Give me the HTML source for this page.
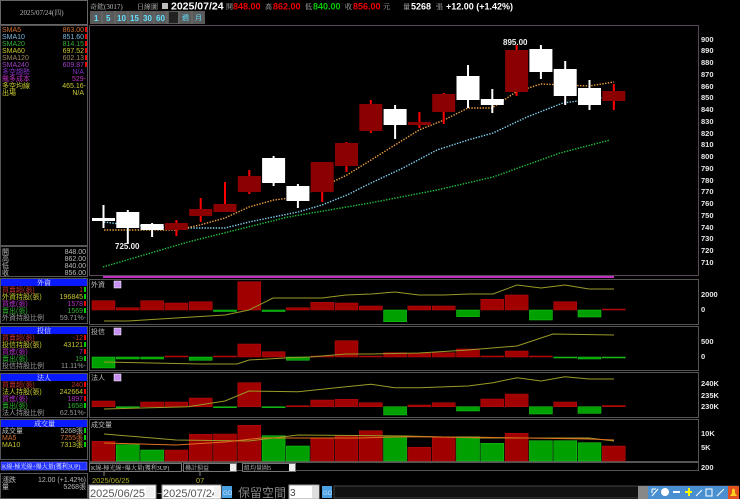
<!DOCTYPE html>
<html><head><meta charset="utf-8"><style>
html,body{margin:0;padding:0;background:#000;width:740px;height:499px;overflow:hidden}
svg{display:block;font-size:7px}
text{font-family:"Liberation Sans","Noto Sans CJK TC",sans-serif}
.s{font-family:"Liberation Serif","Noto Serif CJK SC",serif}
.ax{fill:#e8e8e8;font-weight:bold;font-size:7.5px}
</style></head><body>
<svg width="740" height="499" viewBox="0 0 740 499">
<rect width="740" height="499" fill="#000"/>
<!-- left panel -->
<rect x="0.5" y="0.5" width="87" height="24" fill="#000" stroke="#666"/>
<text x="20" y="15" fill="#bbb" class="s">2025/07/24(四)</text>
<rect x="0.5" y="25.5" width="87" height="220" fill="#000" stroke="#555"/>
<g class="s">
<text x="2" y="32" fill="#d07030">SMA5</text><text x="84" y="32" fill="#d07030" text-anchor="end">863.00</text>
<text x="2" y="39" fill="#7ab8e0">SMA10</text><text x="84" y="39" fill="#7ab8e0" text-anchor="end">851.60</text>
<text x="2" y="46" fill="#30b030">SMA20</text><text x="84" y="46" fill="#30b030" text-anchor="end">814.15</text>
<text x="2" y="53" fill="#c8c830">SMA60</text><text x="84" y="53" fill="#c8c830" text-anchor="end">697.52</text>
<text x="2" y="60" fill="#a08860">SMA120</text><text x="84" y="60" fill="#a08860" text-anchor="end">602.13</text>
<text x="2" y="67" fill="#a040c0">SMA240</text><text x="84" y="67" fill="#a040c0" text-anchor="end">609.87</text>
<text x="2" y="74" fill="#8030c0">多空趨勢</text><text x="84" y="74" fill="#8030c0" text-anchor="end">N/A</text>
<text x="2" y="81" fill="#c030c0">飆多成本</text><text x="86" y="81" fill="#c030c0" text-anchor="end">529-</text>
<text x="2" y="88" fill="#c8c830">多空均線</text><text x="86" y="88" fill="#c8c830" text-anchor="end">465.16-</text>
<text x="2" y="95" fill="#c8c830">出場</text><text x="84" y="95" fill="#c8c830" text-anchor="end">N/A</text>
</g>
<g fill="#e00">
<rect x="85" y="27" width="2" height="5"/><rect x="85" y="34" width="2" height="5"/><rect x="85" y="41" width="2" height="5"/><rect x="85" y="48" width="2" height="5"/><rect x="85" y="55" width="2" height="5"/><rect x="85" y="62" width="2" height="5"/>
</g>
<rect x="0.5" y="246.5" width="87" height="30" fill="#000" stroke="#555"/>
<g class="s" fill="#bbb">
<text x="2" y="254">開</text><text x="86" y="254" text-anchor="end">848.00</text>
<text x="2" y="261">高</text><text x="86" y="261" text-anchor="end">862.00</text>
<text x="2" y="268">低</text><text x="86" y="268" text-anchor="end">840.00</text>
<text x="2" y="275">收</text><text x="86" y="275" text-anchor="end">856.00</text>
</g>
<!-- 外資 -->
<rect x="1" y="279" width="86" height="7" fill="#0a1aff"/><text x="37" y="285" fill="#eee" class="s">外資</text>
<g class="s">
<text x="2" y="292" fill="#c03030">買賣超(張)</text><text x="83" y="292" fill="#c03030" text-anchor="end">1</text>
<text x="2" y="299" fill="#c8c830">外資持股(張)</text><text x="83" y="299" fill="#c8c830" text-anchor="end">196845</text>
<text x="2" y="306" fill="#b030c0">買進(張)</text><text x="83" y="306" fill="#b030c0" text-anchor="end">1578</text>
<text x="2" y="313" fill="#30b030">賣出(張)</text><text x="83" y="313" fill="#30b030" text-anchor="end">1569</text>
<text x="2" y="320" fill="#999">外資持股比例</text><text x="86" y="320" fill="#999" text-anchor="end">59.71%-</text>
</g>
<rect x="1" y="327" width="86" height="7" fill="#0a1aff"/><text x="37" y="333" fill="#eee" class="s">投信</text>
<g class="s">
<text x="2" y="340" fill="#c03030">買賣超(張)</text><text x="83" y="340" fill="#c03030" text-anchor="end">-12</text>
<text x="2" y="347" fill="#c8c830">投信持股(張)</text><text x="83" y="347" fill="#c8c830" text-anchor="end">43121</text>
<text x="2" y="354" fill="#b030c0">買進(張)</text><text x="83" y="354" fill="#b030c0" text-anchor="end">7</text>
<text x="2" y="361" fill="#30b030">賣出(張)</text><text x="83" y="361" fill="#30b030" text-anchor="end">19</text>
<text x="2" y="368" fill="#999">投信持股比例</text><text x="86" y="368" fill="#999" text-anchor="end">11.11%-</text>
</g>
<rect x="1" y="374" width="86" height="7" fill="#0a1aff"/><text x="37" y="380" fill="#eee" class="s">法人</text>
<g class="s">
<text x="2" y="387" fill="#c03030">買賣超(張)</text><text x="83" y="387" fill="#c03030" text-anchor="end">240</text>
<text x="2" y="394" fill="#c8c830">法人持股(張)</text><text x="83" y="394" fill="#c8c830" text-anchor="end">242664</text>
<text x="2" y="401" fill="#b030c0">買進(張)</text><text x="83" y="401" fill="#b030c0" text-anchor="end">1897</text>
<text x="2" y="408" fill="#30b030">賣出(張)</text><text x="83" y="408" fill="#30b030" text-anchor="end">1658</text>
<text x="2" y="415" fill="#999">法人持股比例</text><text x="86" y="415" fill="#999" text-anchor="end">62.51%-</text>
</g>
<rect x="1" y="420" width="86" height="7" fill="#0a1aff"/><text x="34" y="426" fill="#eee" class="s">成交量</text>
<g class="s">
<text x="2" y="433" fill="#bbb">成交量</text><text x="83" y="433" fill="#bbb" text-anchor="end">5268張</text>
<text x="2" y="440" fill="#d07030">MA5</text><text x="83" y="440" fill="#d07030" text-anchor="end">7255張</text>
<text x="2" y="447" fill="#c8c830">MA10</text><text x="83" y="447" fill="#c8c830" text-anchor="end">7313張</text>
</g>
<g fill="#0c0"><rect x="84" y="287" width="2" height="5"/><rect x="84" y="294" width="2" height="5"/><rect x="84" y="308" width="2" height="5"/><rect x="84" y="342" width="2" height="5"/><rect x="84" y="356" width="2" height="5"/><rect x="84" y="403" width="2" height="5"/><rect x="84" y="428" width="2" height="5"/><rect x="84" y="435" width="2" height="5"/><rect x="84" y="442" width="2" height="5"/></g>
<g fill="#e00"><rect x="84" y="301" width="2" height="5"/><rect x="84" y="335" width="2" height="5"/><rect x="84" y="349" width="2" height="5"/><rect x="84" y="382" width="2" height="5"/><rect x="84" y="389" width="2" height="5"/><rect x="84" y="396" width="2" height="5"/></g>
<g stroke="#555" fill="none"><rect x="0.5" y="278.5" width="87" height="45"/><rect x="0.5" y="326.5" width="87" height="44"/><rect x="0.5" y="373.5" width="87" height="44"/><rect x="0.5" y="419.5" width="87" height="40"/><rect x="0.5" y="473.5" width="87" height="25"/></g>
<rect x="1" y="462" width="86" height="8" fill="#2030ff" stroke="#8080ff" stroke-width="0.6"/>
<text x="2" y="468.5" fill="#eee" class="s" font-size="6">K線-極光線+爆大量(獲利3UP)</text>
<g class="s" fill="#bbb"><text x="2" y="482">漲跌</text><text x="86" y="482" text-anchor="end">12.00 (+1.42%)</text><text x="2" y="489">量</text><text x="86" y="489" text-anchor="end">5268張</text></g>

<!-- header -->
<text x="90" y="9" fill="#bbb" class="s">奇鋐(3017)</text>
<text x="158" y="9" fill="#bbb" class="s" text-anchor="end">日線圖</text>
<rect x="162" y="3" width="6" height="6" fill="#bbb"/>
<text x="171" y="9.5" fill="#fff" font-weight="bold" font-size="10.5">2025/07/24</text>
<text x="226" y="9" fill="#bbb" class="s">開</text><text x="233" y="9.5" fill="#e00" font-weight="bold" font-size="9">848.00</text>
<text x="265" y="9" fill="#bbb" class="s">高</text><text x="273" y="9.5" fill="#e00" font-weight="bold" font-size="9">862.00</text>
<text x="305" y="9" fill="#bbb" class="s">低</text><text x="313" y="9.5" fill="#0c0" font-weight="bold" font-size="9">840.00</text>
<text x="345" y="9" fill="#bbb" class="s">收</text><text x="353" y="9.5" fill="#e00" font-weight="bold" font-size="9">856.00</text>
<text x="383" y="9" fill="#bbb" class="s">元</text>
<text x="403" y="9" fill="#bbb" class="s">量</text><text x="411" y="9.5" fill="#fff" font-weight="bold" font-size="9">5268</text>
<text x="436" y="9" fill="#bbb" class="s">張</text>
<text x="446" y="9.5" fill="#fff" font-weight="bold" font-size="9">+12.00 (+1.42%)</text>
<rect x="90" y="11" width="115" height="13" fill="#5a5a5a"/>
<g stroke="#777" stroke-width="0.7"><line x1="102" y1="11" x2="102" y2="24"/><line x1="115" y1="11" x2="115" y2="24"/><line x1="128" y1="11" x2="128" y2="24"/><line x1="141" y1="11" x2="141" y2="24"/><line x1="154" y1="11" x2="154" y2="24"/><line x1="167" y1="11" x2="167" y2="24"/><line x1="179" y1="11" x2="179" y2="24"/><line x1="192" y1="11" x2="192" y2="24"/></g>
<rect x="169" y="12" width="9" height="11" fill="#222"/>
<g fill="#60e0ff" font-weight="bold" font-size="8"><text x="94" y="21">1</text><text x="106" y="21">5</text><text x="117" y="21">10</text><text x="130" y="21">15</text><text x="143" y="21">30</text><text x="156" y="21">60</text></g>
<g fill="#60e0ff" class="s"><text x="182" y="20">週</text><text x="195" y="20">月</text></g>

<!-- main frame -->
<rect x="89.5" y="25.5" width="609" height="250" fill="none" stroke="#5a4858"/>
<g class="ax">
<text x="701" y="42">900</text><text x="701" y="53">890</text><text x="701" y="65">880</text><text x="701" y="77">870</text><text x="701" y="89">860</text><text x="701" y="100">850</text><text x="701" y="112">840</text><text x="701" y="124">830</text><text x="701" y="136">820</text><text x="701" y="147">810</text><text x="701" y="159">800</text><text x="701" y="171">790</text><text x="701" y="183">780</text><text x="701" y="194">770</text><text x="701" y="206">760</text><text x="701" y="218">750</text><text x="701" y="230">740</text><text x="701" y="241">730</text><text x="701" y="253">720</text><text x="701" y="265">710</text>
</g>
<!-- MAs -->
<g fill="none" stroke-width="1.4" stroke-dasharray="1.4 1.4">
<polyline stroke="#20c040" points="103,267 188,242 288,217 370,203 437,190 493,177 560,153 610,140"/>
<polyline stroke="#80d0f0" points="104,222 128,225 176,228 225,228 249,222 298,212 322,205 347,195 371,183 403,168 437,150 468,140 493,133 527,117 563,103 614,96"/>
<polyline stroke="#f0a040" points="104,230 176,230 200,225 225,218 249,207 274,200 298,197 322,187 347,175 371,160 395,145 419,130 444,120 468,108 492,108 516,92 541,84 565,85 589,86 614,82"/>
</g>
<!-- candles -->
<g stroke-width="2">
<g stroke="#fff"><line x1="103.5" y1="205" x2="103.5" y2="228"/><line x1="127.8" y1="210" x2="127.8" y2="244"/><line x1="152.1" y1="223" x2="152.1" y2="237"/><line x1="273.6" y1="156" x2="273.6" y2="186"/><line x1="297.9" y1="184" x2="297.9" y2="208"/><line x1="395.1" y1="105" x2="395.1" y2="139"/><line x1="468" y1="65" x2="468" y2="108"/><line x1="492.3" y1="89" x2="492.3" y2="113"/><line x1="540.9" y1="45" x2="540.9" y2="79"/><line x1="565.2" y1="61" x2="565.2" y2="105"/><line x1="589.5" y1="80" x2="589.5" y2="110"/></g>
<g stroke="#f00"><line x1="176.4" y1="220" x2="176.4" y2="236"/><line x1="200.7" y1="198" x2="200.7" y2="222"/><line x1="225" y1="182" x2="225" y2="212"/><line x1="249.3" y1="170" x2="249.3" y2="194"/><line x1="322.2" y1="162" x2="322.2" y2="202"/><line x1="346.5" y1="142" x2="346.5" y2="172"/><line x1="370.8" y1="100" x2="370.8" y2="133"/><line x1="419.4" y1="112" x2="419.4" y2="128"/><line x1="443.7" y1="93" x2="443.7" y2="124"/><line x1="516.6" y1="45" x2="516.6" y2="96"/><line x1="613.8" y1="84" x2="613.8" y2="110"/></g>
</g>
<g fill="#fff">
<rect x="92" y="218" width="23" height="3"/><rect x="116.3" y="212" width="23" height="16"/><rect x="140.6" y="224" width="23" height="6"/><rect x="262.1" y="158" width="23" height="25"/><rect x="286.4" y="186" width="23" height="15"/><rect x="383.6" y="109" width="23" height="16"/><rect x="456.5" y="76" width="23" height="24"/><rect x="480.8" y="99" width="23" height="6"/><rect x="529.4" y="49" width="23" height="23"/><rect x="553.7" y="69" width="23" height="27"/><rect x="578" y="88" width="23" height="17"/>
</g>
<g fill="#8b0000">
<rect x="164.9" y="223" width="23" height="7"/><rect x="189.2" y="209" width="23" height="7"/><rect x="213.5" y="204" width="23" height="8"/><rect x="237.8" y="176" width="23" height="16"/><rect x="310.7" y="162" width="23" height="30"/><rect x="335" y="143" width="23" height="23"/><rect x="359.3" y="104" width="23" height="27"/><rect x="407.9" y="122" width="23" height="3"/><rect x="432.2" y="94" width="23" height="18"/><rect x="505.1" y="50" width="23" height="42"/><rect x="602.3" y="91" width="23" height="10"/>
</g>
<text x="115" y="249" fill="#eee" font-weight="bold" font-size="8">725.00</text>
<text x="503" y="45" fill="#eee" font-weight="bold" font-size="8">895.00</text>
<rect x="103" y="276" width="511" height="2" fill="#c030c0"/>

<!-- sub frames -->
<g fill="none" stroke="#555"><rect x="89.5" y="279.5" width="609" height="45"/><rect x="89.5" y="326.5" width="609" height="44"/><rect x="89.5" y="372.5" width="609" height="45"/><rect x="89.5" y="419.5" width="609" height="42"/><rect x="89.5" y="462.5" width="609" height="8"/></g>
<g class="s" fill="#bbb"><text x="91" y="287">外資</text><text x="91" y="334">投信</text><text x="91" y="380">法人</text><text x="91" y="427">成交量</text></g>
<g fill="#c890f0" stroke="#fff" stroke-width="0.5"><rect x="114" y="281" width="7" height="7"/><rect x="114" y="328" width="7" height="7"/><rect x="114" y="374" width="7" height="7"/></g>
<g class="ax"><text x="701" y="297">2000</text><text x="701" y="312">0</text><text x="701" y="344">500</text><text x="701" y="359">0</text><text x="701" y="386">240K</text><text x="701" y="398">235K</text><text x="701" y="409">230K</text><text x="701" y="436">10K</text><text x="701" y="450">5K</text><text x="701" y="470">200</text></g>

<!-- 外資 bars -->
<g fill="#a00000" stroke="#c01010" stroke-width="0.5">
<rect x="92" y="300.7" width="23" height="9.3"/><rect x="116.3" y="307.7" width="23" height="2.3"/><rect x="140.6" y="300.7" width="23" height="9.3"/><rect x="164.9" y="303" width="23" height="7"/><rect x="189.2" y="301.7" width="23" height="8.3"/><rect x="237.8" y="281.7" width="23" height="28.3"/><rect x="286.4" y="307.7" width="23" height="2.3"/><rect x="310.7" y="302.3" width="23" height="7.7"/><rect x="335" y="303" width="23" height="7"/><rect x="359.3" y="306" width="23" height="4"/><rect x="407.9" y="306" width="23" height="4"/><rect x="432.2" y="306" width="23" height="4"/><rect x="480.8" y="299.3" width="23" height="10.7"/><rect x="505.1" y="295" width="23" height="15"/><rect x="553.7" y="301.7" width="23" height="8.3"/><rect x="602.3" y="309" width="23" height="1"/>
</g>
<g fill="#00a000" stroke="#20d020" stroke-width="0.5">
<rect x="213.5" y="310" width="23" height="1.5"/><rect x="262.1" y="310" width="23" height="1.5"/><rect x="383.6" y="310" width="23" height="11.7"/><rect x="456.5" y="310" width="23" height="6.7"/><rect x="529.4" y="310" width="23" height="10"/><rect x="578" y="310" width="23" height="7"/>
</g>
<polyline fill="none" stroke="#9a9a28" stroke-width="1" points="104,321 128,321 176,318 225,315 249,310 273,298 298,298 322,298 346,295 371,294 395,292 419,295 444,295 468,294 493,294 517,285 541,288 565,285 589,289 614,289"/>
<!-- 投信 bars -->
<g fill="#a00000" stroke="#c01010" stroke-width="0.5">
<rect x="164.9" y="356" width="23" height="1"/><rect x="213.5" y="356" width="23" height="1"/><rect x="237.8" y="344" width="23" height="13"/><rect x="262.1" y="351.7" width="23" height="5.3"/><rect x="310.7" y="356" width="23" height="1"/><rect x="335" y="340.7" width="23" height="16.3"/><rect x="359.3" y="356" width="23" height="1"/><rect x="383.6" y="352.7" width="23" height="4.3"/><rect x="407.9" y="353.3" width="23" height="3.7"/><rect x="432.2" y="352.7" width="23" height="4.3"/><rect x="456.5" y="349" width="23" height="8"/><rect x="480.8" y="356" width="23" height="1"/><rect x="505.1" y="351" width="23" height="6"/><rect x="529.4" y="356" width="23" height="1"/>
</g>
<g fill="#00a000" stroke="#20d020" stroke-width="0.5">
<rect x="92" y="357" width="23" height="11"/><rect x="116.3" y="357" width="23" height="2"/><rect x="140.6" y="357" width="23" height="2"/><rect x="189.2" y="357" width="23" height="3.3"/><rect x="286.4" y="357" width="23" height="3.3"/><rect x="553.7" y="357" width="23" height="1"/><rect x="578" y="357" width="23" height="2"/><rect x="602.3" y="357" width="23" height="1"/>
</g>
<polyline fill="none" stroke="#9a9a28" stroke-width="1" points="104,362 152,363 200,364 237,364 249,360 285,358 310,357 346,354 371,354 419,353 468,350 492,348 517,346 553,334 614,335"/>
<!-- 法人 bars -->
<g fill="#a00000" stroke="#c01010" stroke-width="0.5">
<rect x="92" y="401" width="23" height="5.7"/><rect x="140.6" y="402" width="23" height="4.7"/><rect x="164.9" y="402" width="23" height="4.7"/><rect x="189.2" y="398" width="23" height="8.7"/><rect x="237.8" y="382.7" width="23" height="24"/><rect x="286.4" y="405.7" width="23" height="1"/><rect x="310.7" y="400" width="23" height="6.7"/><rect x="335" y="399.3" width="23" height="7.4"/><rect x="359.3" y="402.7" width="23" height="4"/><rect x="407.9" y="405" width="23" height="1.7"/><rect x="432.2" y="402.7" width="23" height="4"/><rect x="480.8" y="399" width="23" height="7.7"/><rect x="505.1" y="394" width="23" height="12.7"/><rect x="553.7" y="402" width="23" height="4.7"/><rect x="602.3" y="405.5" width="23" height="1.2"/>
</g>
<g fill="#00a000" stroke="#20d020" stroke-width="0.5">
<rect x="116.3" y="406.7" width="23" height="1"/><rect x="213.5" y="406.7" width="23" height="1"/><rect x="262.1" y="406.7" width="23" height="1"/><rect x="383.6" y="406.7" width="23" height="8.3"/><rect x="456.5" y="406.7" width="23" height="4.3"/><rect x="529.4" y="406.7" width="23" height="7.3"/><rect x="578" y="406.7" width="23" height="6.7"/>
</g>
<polyline fill="none" stroke="#9a9a28" stroke-width="1" points="104,409 188,406.7 225,401 249,391 298,391.7 346,386.7 371,384.3 395,387.7 419,387.7 468,386 493,382.7 517,377.7 541,381 565,376.7 589,379 614,379"/>
<!-- volume -->
<g fill="#a00000" stroke="#c01010" stroke-width="0.5">
<rect x="92" y="441.3" width="23" height="19.7"/><rect x="164.9" y="450" width="23" height="11"/><rect x="189.2" y="434.3" width="23" height="26.7"/><rect x="213.5" y="434" width="23" height="27"/><rect x="237.8" y="425.3" width="23" height="35.7"/><rect x="310.7" y="437.7" width="23" height="23.3"/><rect x="335" y="436" width="23" height="25"/><rect x="359.3" y="430.7" width="23" height="30.3"/><rect x="407.9" y="447.3" width="23" height="13.7"/><rect x="432.2" y="437.7" width="23" height="23.3"/><rect x="505.1" y="433.3" width="23" height="27.7"/><rect x="602.3" y="446" width="23" height="15"/>
</g>
<g fill="#00a000" stroke="#20d020" stroke-width="0.5">
<rect x="116.3" y="444.7" width="23" height="16.3"/><rect x="140.6" y="450" width="23" height="11"/><rect x="262.1" y="435.7" width="23" height="25.3"/><rect x="286.4" y="446" width="23" height="15"/><rect x="383.6" y="436.7" width="23" height="24.3"/><rect x="456.5" y="436.7" width="23" height="24.3"/><rect x="480.8" y="443.3" width="23" height="17.7"/><rect x="529.4" y="440.7" width="23" height="20.3"/><rect x="553.7" y="440.7" width="23" height="20.3"/><rect x="578" y="442.7" width="23" height="18.3"/>
</g>
<polyline fill="none" stroke="#9a9a28" stroke-width="1" points="104,434 176,440 249,441 298,435 407,436 480,438 589,438 614,441"/>
<polyline fill="none" stroke="#e07020" stroke-width="1" points="104,443 176,445 225,442 261,438 358,438 407,436.7 480,437.3 589,439 614,440"/>

<!-- bottom bar -->
<rect x="89.5" y="463.5" width="92" height="8" fill="#000" stroke="#777"/>
<text x="91" y="470" fill="#ccc" class="s" font-size="6">K線-極光線+爆大量(獲利3UP)</text>
<rect x="183.5" y="463.5" width="53" height="8" fill="#000" stroke="#777"/><text x="185" y="470" fill="#ccc" class="s" font-size="6">疊計損益</text><rect x="230" y="464" width="6" height="7" fill="#eee"/>
<rect x="242.5" y="463.5" width="53" height="8" fill="#000" stroke="#777"/><text x="244" y="470" fill="#ccc" class="s" font-size="6">組均量圖5</text><rect x="289" y="464" width="6" height="7" fill="#eee"/>
<line x1="104" y1="472" x2="104" y2="476" stroke="#888"/><line x1="200" y1="472" x2="200" y2="476" stroke="#888"/>
<text x="92" y="483" fill="#b0b020" font-size="7.5">2025/06/25</text>
<text x="196" y="483" fill="#b0b020" font-size="7.5">07</text>
<rect x="89" y="485" width="67" height="14" fill="#fff" stroke="#999"/><text x="90" y="497" fill="#555" font-size="11">2025/06/25</text><rect x="146" y="487" width="8" height="10" fill="#f0f0f0"/>
<text x="157" y="497" fill="#aaa" font-size="10">~</text>
<rect x="162" y="485" width="59" height="14" fill="#fff" stroke="#999"/><text x="163" y="497" fill="#555" font-size="11">2025/07/24</text><rect x="214" y="487" width="7" height="10" fill="#f0f0f0"/>
<rect x="222" y="486" width="10" height="12" fill="#4aa0e0"/><text x="223" y="495" fill="#cdf" font-size="6">GO</text>
<text x="238" y="497" fill="#888" font-size="12" font-family="Noto Sans CJK TC,sans-serif">保留空間</text>
<rect x="289" y="485" width="30" height="14" fill="#fff" stroke="#999"/><text x="290" y="496" fill="#444" font-size="10">3</text><rect x="312" y="486" width="7" height="12" fill="#ddd"/>
<rect x="322" y="486" width="10" height="12" fill="#4aa0e0"/><text x="323" y="495" fill="#cdf" font-size="6">GO</text>
<rect x="334" y="486" width="404" height="12" fill="#111" stroke="#444"/>
<rect x="638" y="486" width="100" height="13" fill="#4a90d0"/>
<rect x="638" y="486" width="10" height="13" fill="#888"/>
<g fill="#fff"><circle cx="665" cy="492" r="4"/><rect x="673" y="491" width="7" height="2"/><rect x="685" y="491" width="7" height="2" fill="#ff0"/><rect x="688" y="488" width="2" height="8" fill="#ff0"/></g>
<path d="M652 496 L658 489 M652 489 L656 489 M652 489 L652 493" stroke="#fff" fill="none"/>
<path d="M696 496 L702 490 M706 489 L712 489 L712 496 L706 496 Z M717 496 L724 489" stroke="#fff" fill="none" stroke-width="1"/>
<rect x="728" y="486" width="11" height="13" fill="#e05020"/><path d="M730 496 L737 496 L735 493 L735 490 Q733.5 487 732 490 L732 493 Z" fill="#ffd020"/>
</svg>
</body></html>
